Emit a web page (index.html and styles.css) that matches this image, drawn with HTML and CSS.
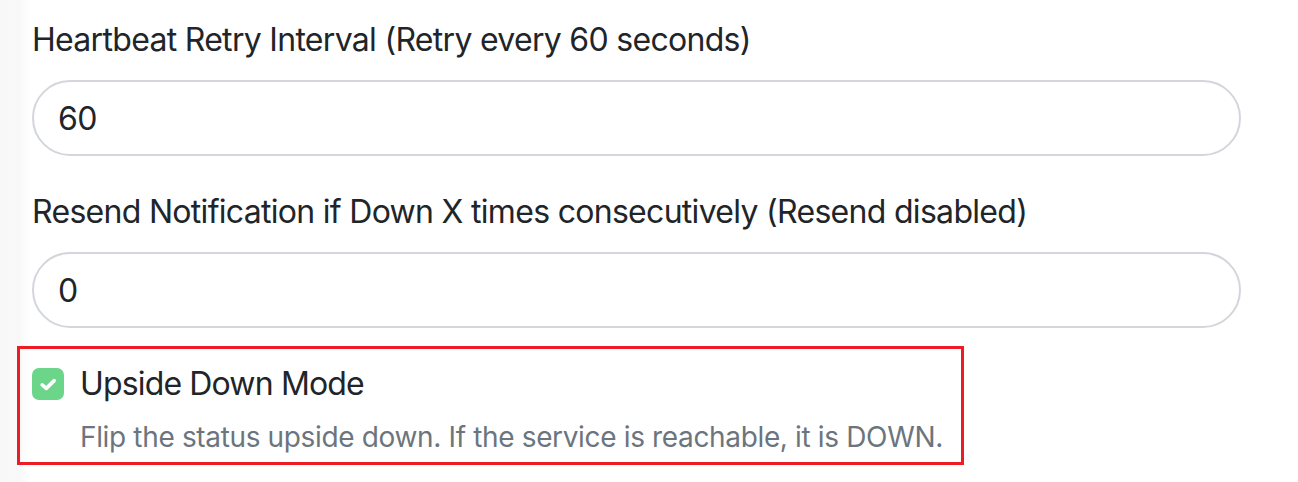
FILE: index.html
```html
<!DOCTYPE html>
<html lang="en">
<head>
<meta charset="utf-8">
<title>Monitor settings</title>
<link rel="stylesheet" href="styles.css">
</head>
<body>
<div class="form">
  <div class="field">
    <label class="form-label" for="retry">Heartbeat Retry Interval (Retry every 60 seconds)</label>
    <input id="retry" class="form-control" type="number" value="60">
  </div>
  <div class="field">
    <label class="form-label" for="resend">Resend Notification if Down X times consecutively (Resend disabled)</label>
    <input id="resend" class="form-control" type="number" value="0">
  </div>
  <div class="form-check">
    <span class="check-box">
      <svg viewBox="0 0 32 32" width="32" height="32"><path d="M10.2 16.8L14.3 20.4L22.2 12.6" fill="none" stroke="#fff" stroke-width="3.6" stroke-linecap="round" stroke-linejoin="round"/></svg>
    </span>
    <div class="check-body">
      <label class="check-label">Upside Down Mode</label>
      <div class="form-text">Flip the status upside down. If the service is reachable, it is DOWN.</div>
    </div>
    <div class="annotation"></div>
  </div>
</div>
</body>
</html>
```
FILE: styles.css
```css
* { box-sizing: border-box; }
html, body { margin: 0; padding: 0; }
body {
  width: 1298px;
  height: 482px;
  overflow: hidden;
  background: linear-gradient(to right, #f8f8f9 0, #f9f9fa 20px, #ffffff 30px);
  font-family: Inter, "Noto Sans", sans-serif;
  color: #212529;
}
.form {
  width: 1209px;
  margin-left: 32px;
  padding-top: 16px;
}
.field { margin-bottom: 32px; }
.form-label {
  display: block;
  font-size: 32px;
  line-height: 48px;
  letter-spacing: -0.7px;
  margin-bottom: 16px;
  color: #212529;
}
.form-control {
  display: block;
  width: 100%;
  height: 76px;
  padding: 0 24px;
  font-family: inherit;
  font-size: 32px;
  letter-spacing: -0.5px;
  color: #212529;
  background: #fff;
  border: 2px solid #d3d6db;
  border-radius: 38px;
  outline: none;
  -moz-appearance: textfield;
}
.form-control::-webkit-inner-spin-button,
.form-control::-webkit-outer-spin-button { -webkit-appearance: none; margin: 0; }
.form-check {
  position: relative;
  display: flex;
  align-items: flex-start;
  gap: 16px;
}
.check-box {
  flex: none;
  width: 32px;
  height: 32px;
  margin-top: 8px;
  border-radius: 7px;
  background: #6bd58a;
}
.check-box svg { width: 32px; height: 32px; display: block; }
.check-label {
  display: block;
  font-size: 32px;
  line-height: 48px;
  letter-spacing: -0.85px;
}
.form-text {
  margin-top: 8px;
  font-size: 28px;
  line-height: 42px;
  letter-spacing: -0.35px;
  color: #6c757d;
}
.annotation {
  position: absolute;
  left: -15px;
  top: -14px;
  width: 947px;
  height: 119px;
  border: 3px solid #ed1c24;
  pointer-events: none;
}
```
